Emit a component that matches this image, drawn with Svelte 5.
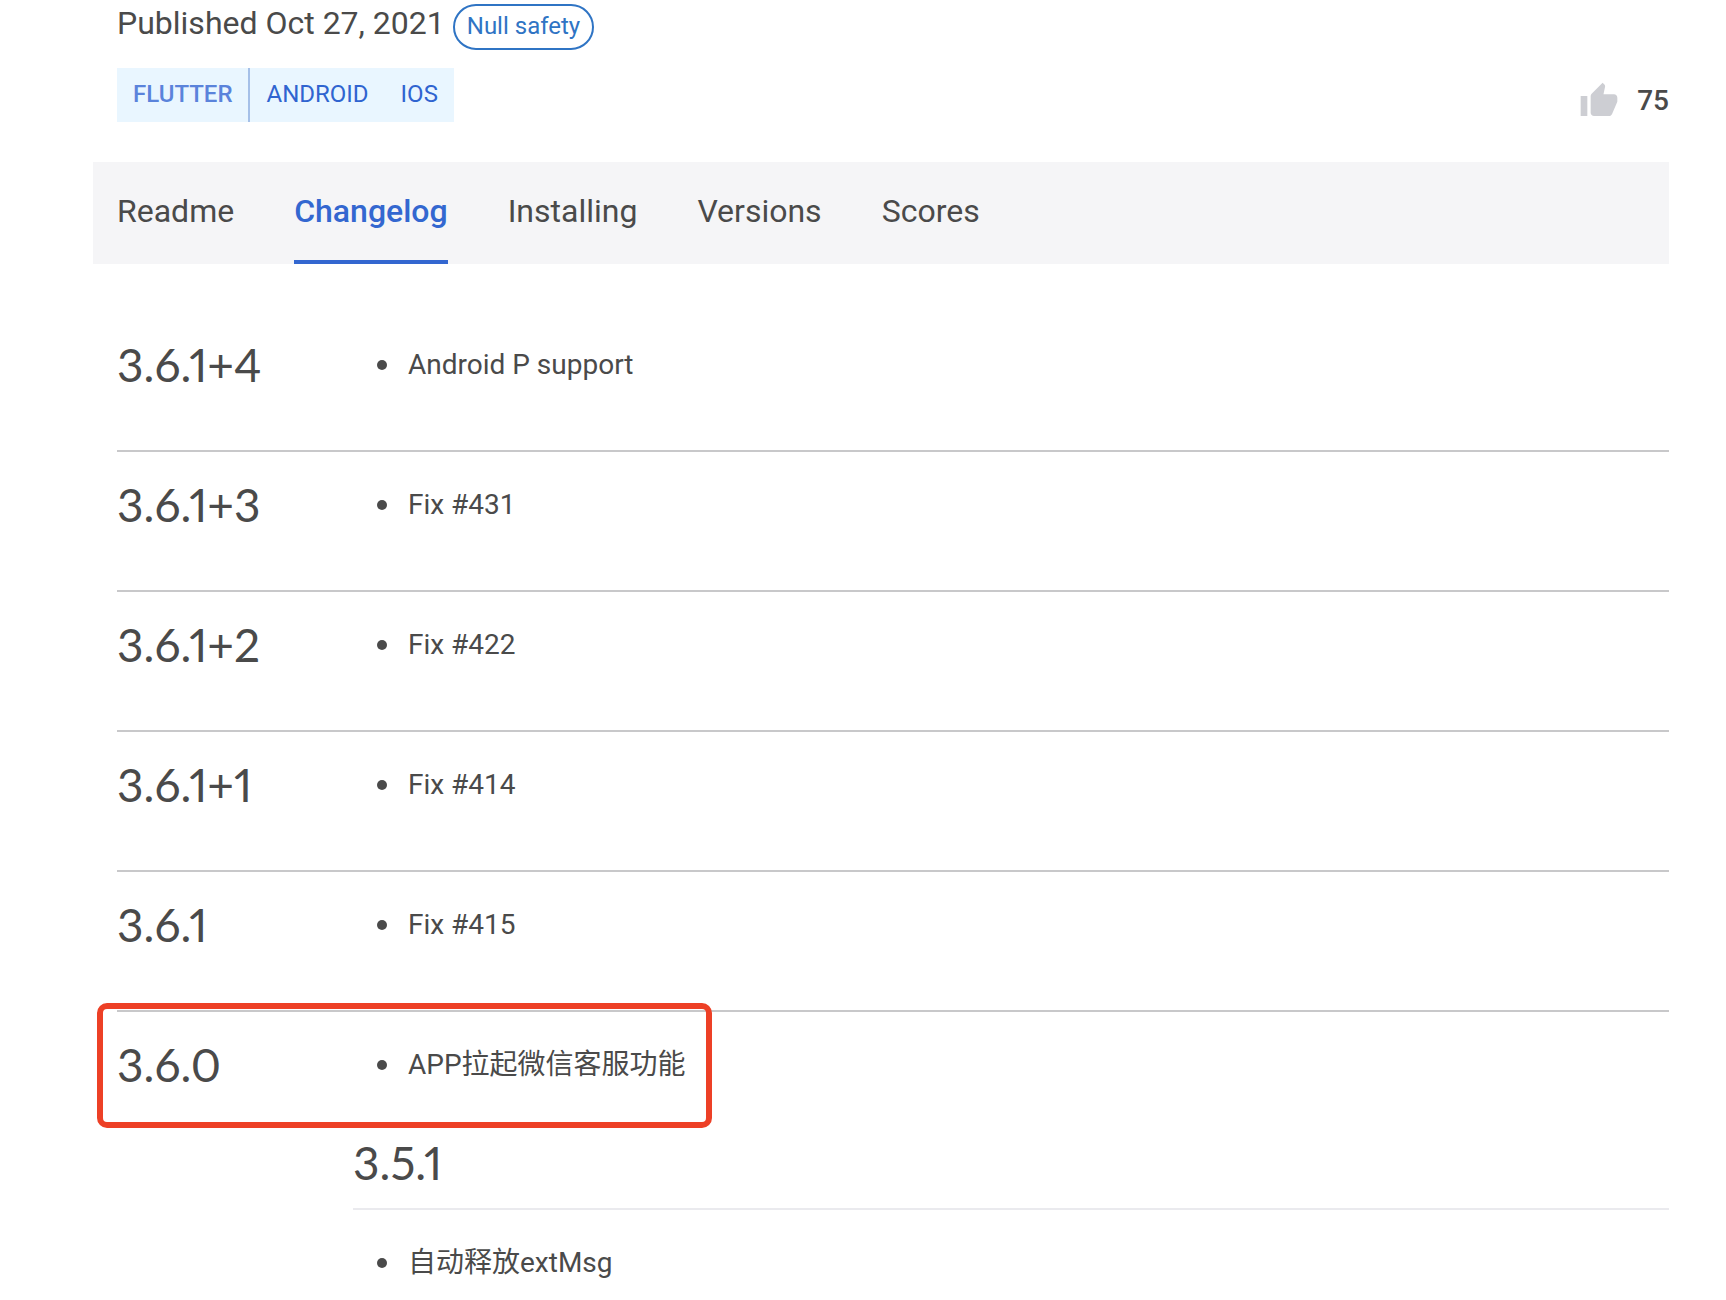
<script>
  const tabs = ['Readme', 'Changelog', 'Installing', 'Versions', 'Scores'];

  let active = $state('Changelog');
  let liked = $state(false);

  const releases = [
    { version: '3.6.1+4', changes: ['Android P support'] },
    { version: '3.6.1+3', changes: ['Fix #431'] },
    { version: '3.6.1+2', changes: ['Fix #422'] },
    { version: '3.6.1+1', changes: ['Fix #414'] },
    { version: '3.6.1', changes: ['Fix #415'] },
    {
      version: '3.6.0',
      changes: ['APP拉起微信客服功能'],
      marked: true,
      nested: { version: '3.5.1', changes: ['自动释放extMsg'] }
    }
  ];
</script>

<main class="package">
  <header class="header">
    <div>
      <div class="published">
        <span>Published Oct 27, 2021</span>
        <a class="pill" href="#null-safety">Null safety</a>
      </div>
      <div class="tags">
        <a class="tag sdk" href="#flutter">FLUTTER</a>
        <a class="tag" href="#android">ANDROID</a>
        <a class="tag" href="#ios">IOS</a>
      </div>
    </div>
    <button class="like" aria-label="Like this package" aria-pressed={liked} onclick={() => (liked = !liked)}>
      <svg viewBox="0 0 24 24" aria-hidden="true">
        <path d="M1 21h4V9H1v12zm22-11c0-1.1-.9-2-2-2h-6.31l.95-4.57.03-.32c0-.41-.17-.79-.44-1.06L14.17 1 7.59 7.59C7.22 7.95 7 8.45 7 9v10c0 1.1.9 2 2 2h9c.83 0 1.54-.5 1.84-1.22l3.02-7.05c.09-.23.14-.47.14-.73v-2z" />
      </svg>
      <span>{liked ? 76 : 75}</span>
    </button>
  </header>

  <nav class="tabs">
    {#each tabs as tab}
      <a class="tab" class:active={tab === active} href="#{tab.toLowerCase()}" onclick={() => (active = tab)}>{tab}</a>
    {/each}
  </nav>

  <section class="changelog">
    {#each releases as release}
      <article class="release">
        <h2 class="version">{release.version}</h2>
        <div class="content">
          <ul class="changes">
            {#each release.changes as change}
              <li>{change}</li>
            {/each}
          </ul>
          {#if release.nested}
            <h2 class="version sub">{release.nested.version}</h2>
            <ul class="changes">
              {#each release.nested.changes as change}
                <li>{change}</li>
              {/each}
            </ul>
          {/if}
        </div>
        {#if release.marked}
          <div class="marker"></div>
        {/if}
      </article>
    {/each}
  </section>
</main>

<style>
  :global(body) {
    margin: 0;
    background: #fff;
  }

  .package {
    padding: 4px 57px 0 93px;
    font-family: Roboto, "Noto Sans CJK SC", sans-serif;
    font-size: 28px;
    color: #4a4a4a;
  }

  a {
    text-decoration: none;
  }

  .header {
    display: flex;
    justify-content: space-between;
    align-items: flex-end;
    padding-left: 24px;
  }

  .published {
    display: flex;
    align-items: baseline;
    gap: 8px;
    font-size: 32px;
    line-height: 38px;
  }

  .pill {
    padding: 0 12px 2px;
    border: 2px solid #2f74c4;
    border-radius: 24px;
    font-size: 24px;
    line-height: 40px;
    color: #2f74c4;
  }

  .tags {
    display: inline-flex;
    margin-top: 18px;
    background: #e9f6ff;
  }

  .tag {
    padding: 0 16px 2px;
    font-size: 24px;
    line-height: 52px;
    color: #2f64d0;
  }

  .sdk {
    border-right: 2px solid #a5c0e8;
    font-weight: 500;
    color: #5a83db;
  }

  .like {
    display: flex;
    align-items: center;
    gap: 18px;
    padding: 0;
    border: 0;
    background: none;
    font: inherit;
    font-weight: 500;
    line-height: 42px;
    color: inherit;
    cursor: pointer;
  }

  .like svg {
    width: 40px;
    height: 40px;
    fill: #cdced3;
  }

  .tabs {
    display: flex;
    gap: 60px;
    margin-top: 40px;
    padding: 0 24px;
    background: #f5f5f7;
    font-size: 32px;
    line-height: 98px;
  }

  .tab {
    border-bottom: 4px solid transparent;
    color: #4a4a4a;
  }

  .tab.active {
    border-color: #3367d0;
    font-weight: 500;
    color: #3367d0;
  }

  .changelog {
    padding: 48px 0 0 24px;
  }

  .release {
    position: relative;
    display: grid;
    grid-template-columns: 236px 1fr;
    padding: 21px 0 53px;
    border-bottom: 2px solid #c8c8ca;
  }

  .release:last-child {
    padding-bottom: 0;
    border-bottom: 0;
  }

  .version {
    margin: 0;
    font-family: Lato, Roboto, sans-serif;
    font-size: 46px;
    font-weight: 400;
    font-variant-numeric: proportional-nums;
    line-height: 64px;
  }

  .sub {
    margin: 34px 0 21px;
    padding-bottom: 13px;
    border-bottom: 2px solid #eaeaee;
  }

  .changes {
    margin: 0;
    padding-left: 24px;
    line-height: 64px;
    list-style: none;
  }

  .changes li {
    display: flex;
    align-items: center;
    gap: 21px;
  }

  .changes li::before {
    content: "";
    width: 10px;
    height: 10px;
    border-radius: 50%;
    background: #4a4a4a;
  }

  /* red callout around the release */
  .marker {
    position: absolute;
    top: -9px;
    left: -20px;
    box-sizing: border-box;
    width: 615px;
    height: 125px;
    border: 6px solid #ed4026;
    border-radius: 10px;
    pointer-events: none;
  }
</style>
